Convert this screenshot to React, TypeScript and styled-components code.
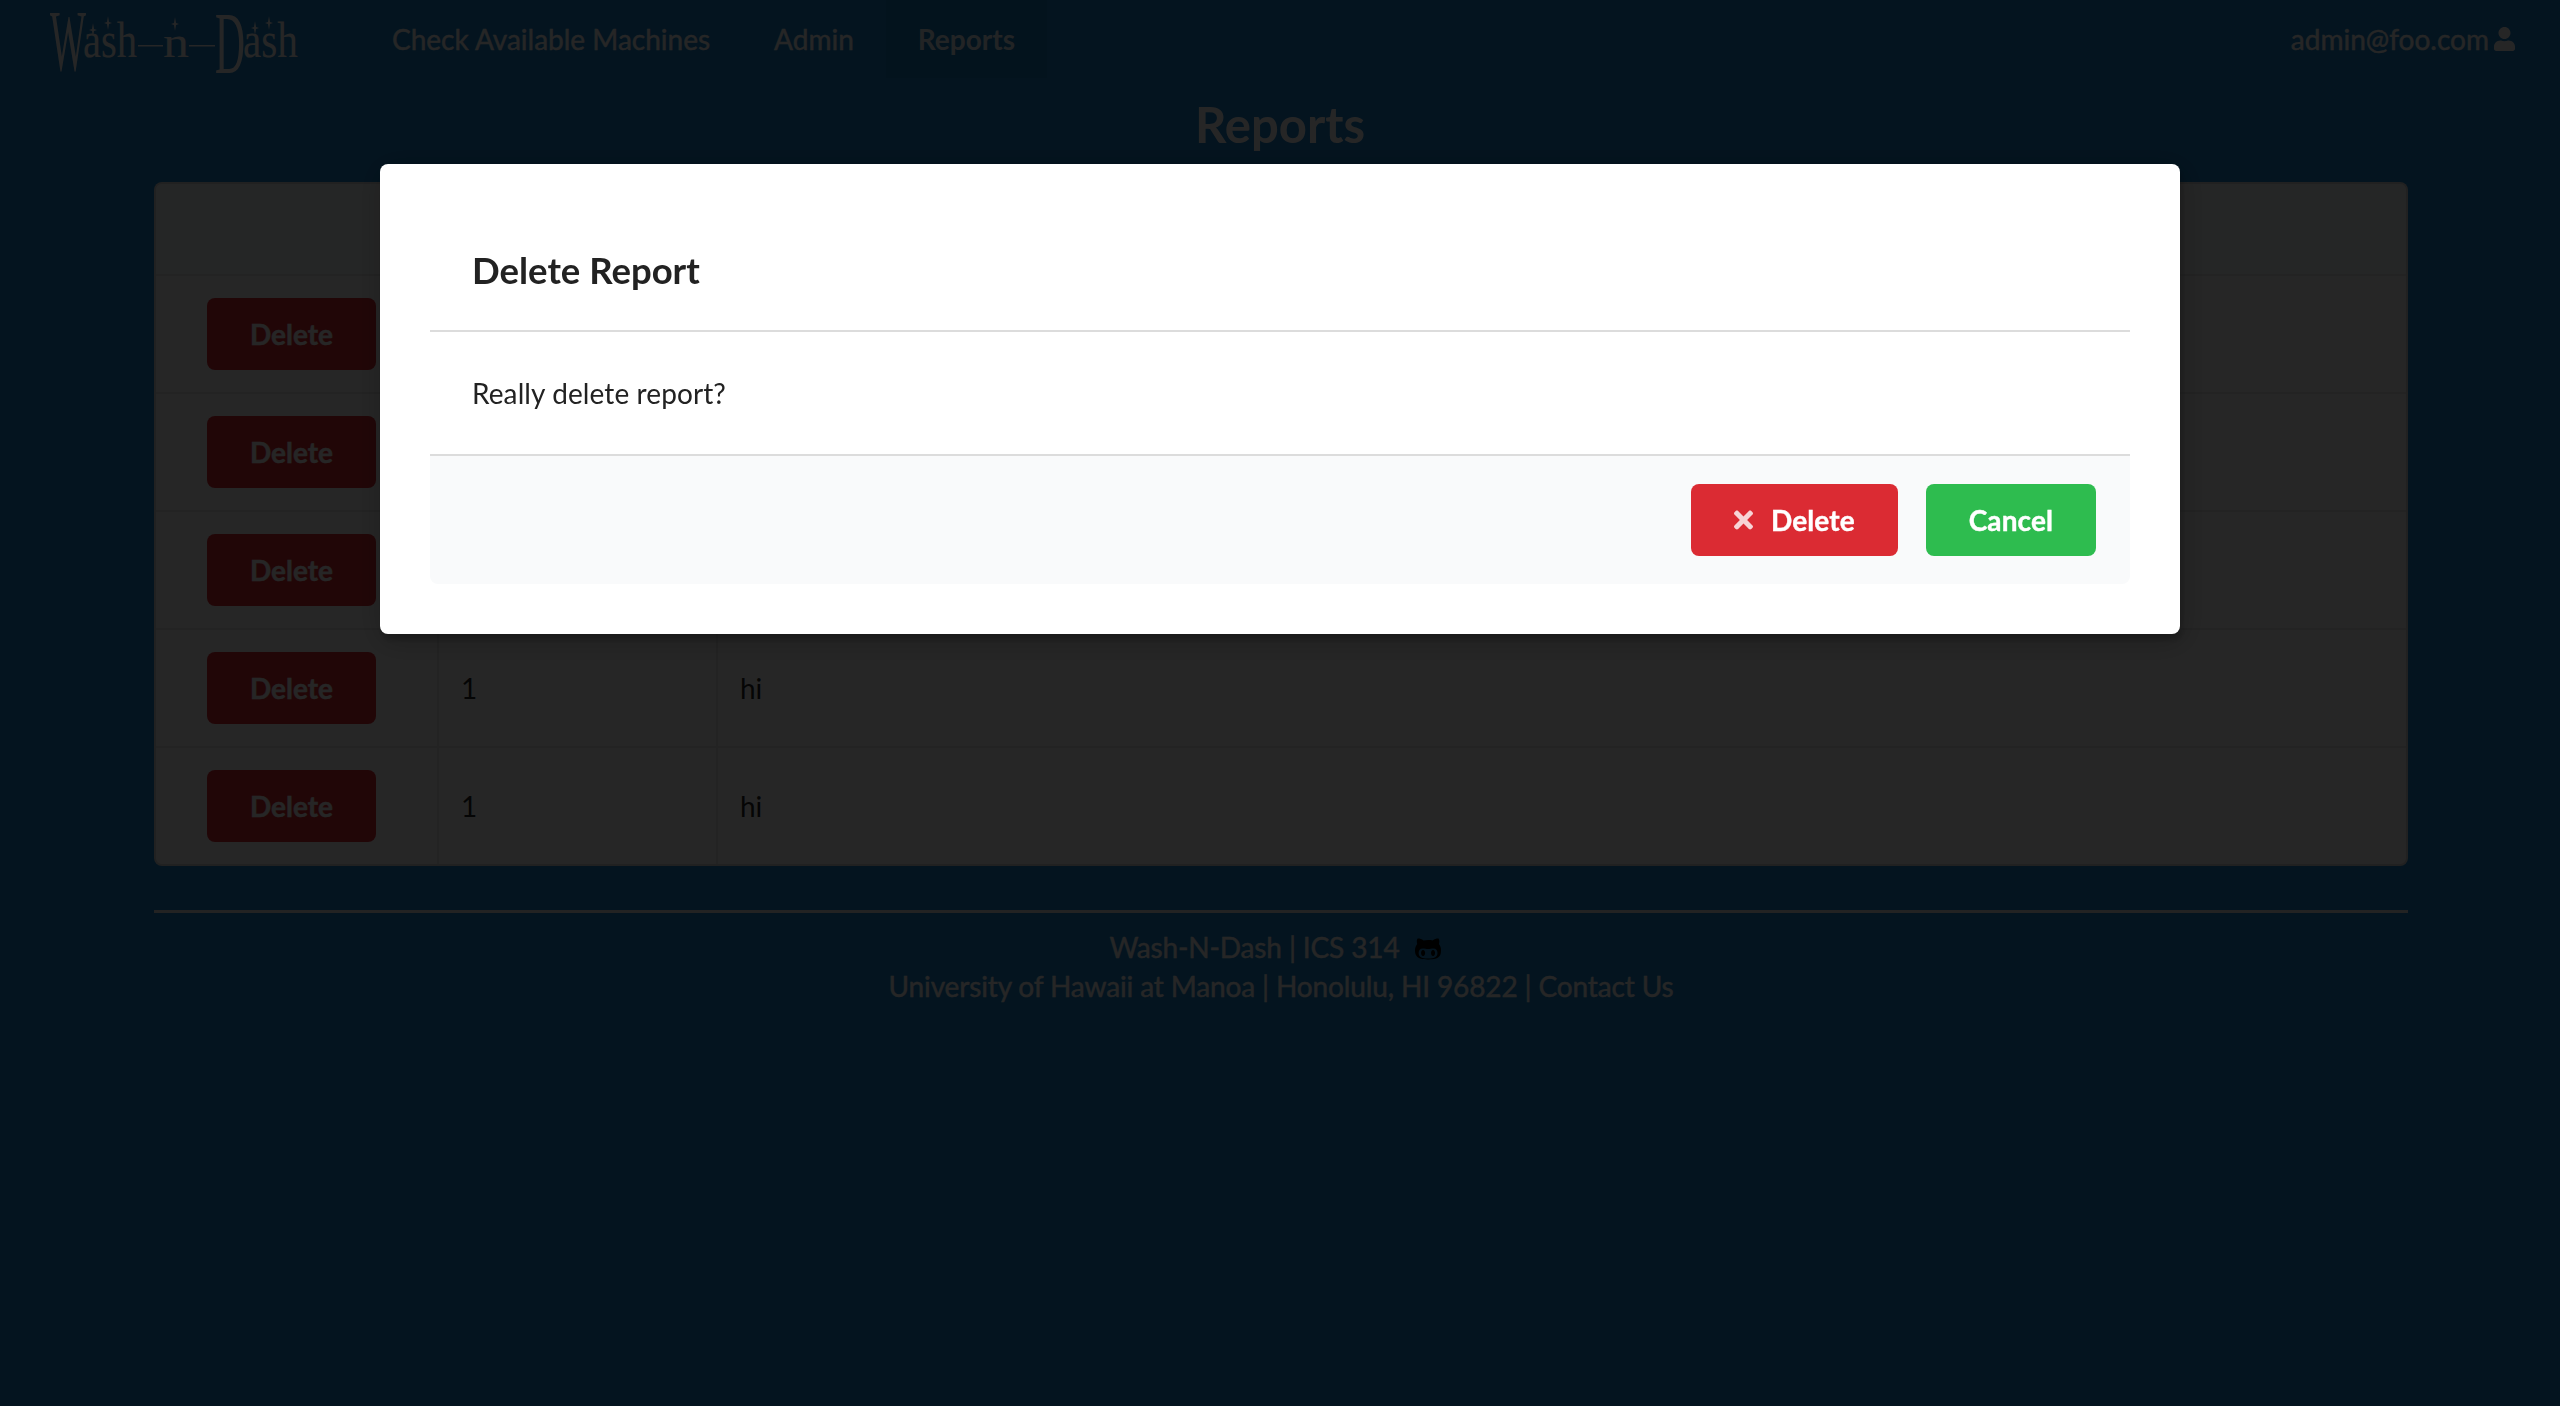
import { FaGithubAlt, FaTimes, FaUser } from "react-icons/fa";
import styled, { createGlobalStyle } from "styled-components";

const reports = [1, 2, 3, 4, 5];

// four pointed star over the letters of the logo
function Sparkle({ x, y }: { x: number; y: number }) {
  return (
    <path
      d={`M${x} ${y - 7}L${x + 1} ${y - 1}L${x + 4} ${y}L${x + 1} ${y + 1}L${x} ${y + 7}L${x - 1} ${y + 1}L${x - 4} ${y}L${x - 1} ${y - 1}Z`}
    />
  );
}

function Logo() {
  return (
    <LogoSvg viewBox="0 0 250 62" width="250" height="62">
      <text x="0" y="58" fontSize="86" textLength="36" lengthAdjust="spacingAndGlyphs">
        W
      </text>
      <text x="33" y="45" fontSize="50" textLength="54" lengthAdjust="spacingAndGlyphs">
        ash
      </text>
      <rect x="88" y="33" width="25" height="1.5" />
      <text x="113" y="45" fontSize="44" textLength="26" lengthAdjust="spacingAndGlyphs">
        n
      </text>
      <rect x="139" y="33" width="26" height="1.5" />
      <text x="165" y="61" fontSize="89" textLength="30" lengthAdjust="spacingAndGlyphs">
        D
      </text>
      <text x="193" y="45" fontSize="50" textLength="55" lengthAdjust="spacingAndGlyphs">
        ash
      </text>
      <Sparkle x={43} y={18} />
      <Sparkle x={58} y={11} />
      <Sparkle x={125} y={12} />
      <Sparkle x={205} y={16} />
      <Sparkle x={219} y={11} />
    </LogoSvg>
  );
}

function App() {
  return (
    <>
      <GlobalStyle />
      <Page>
        <NavBar>
          <LogoItem>
            <Logo />
          </LogoItem>
          <NavItem>Check Available Machines</NavItem>
          <NavItem>Admin</NavItem>
          <NavItem $active>Reports</NavItem>
          <UserItem>
            admin@foo.com <FaUser />
          </UserItem>
        </NavBar>
        <Title>Reports</Title>
        <TableWrapper>
          <ReportTable>
            <thead>
              <tr>
                <HeadCell />
                <HeadCell />
                <HeadCell />
              </tr>
            </thead>
            <tbody>
              {reports.map((id) => (
                <tr key={id}>
                  <ActionCell>
                    <TableButton>Delete</TableButton>
                  </ActionCell>
                  <Cell>1</Cell>
                  <Cell>hi</Cell>
                </tr>
              ))}
            </tbody>
          </ReportTable>
        </TableWrapper>
        <Footer>
          <FooterLine>
            Wash-N-Dash | ICS 314 <GithubLink><FaGithubAlt /></GithubLink>
          </FooterLine>
          <FooterLine>University of Hawaii at Manoa | Honolulu, HI 96822 | Contact Us</FooterLine>
        </Footer>
      </Page>
      <Dimmer>
        <Modal>
          <ModalHeader>Delete Report</ModalHeader>
          <ModalContent>Really delete report?</ModalContent>
          <ModalActions>
            <ModalButton $color="#db2b33">
              <FaTimes />
              Delete
            </ModalButton>
            <ModalButton $color="#2ebc4f">Cancel</ModalButton>
          </ModalActions>
        </Modal>
      </Dimmer>
    </>
  );
}

export default App;

const GlobalStyle = createGlobalStyle`
  html, body {
    margin: 0;
    height: 100%;
    background: #1b85ce;
  }

  body {
    font-family: Lato, "Open Sans", sans-serif;
    font-size: 28px;
    line-height: 40px;
    color: rgba(0, 0, 0, 0.87);
  }

  * {
    box-sizing: border-box;
  }
`;

const Page = styled.div`
  min-height: 1406px;
  background: #1b85ce;
`;

const NavBar = styled.nav`
  display: flex;
  align-items: stretch;
  height: 78px;
  color: #fff;
  -webkit-text-stroke: 0.4px #fff;
`;

const LogoItem = styled.div`
  display: flex;
  align-items: center;
  width: 360px;
  padding: 7px 0 0 50px;
`;

const LogoSvg = styled.svg`
  font-family: "Liberation Serif", serif;
  fill: #fff;
  overflow: visible;
  -webkit-text-stroke: 0;
`;

const NavItem = styled.div<{ $active?: boolean }>`
  display: flex;
  align-items: center;
  padding: 0 32px;
  font-weight: ${({ $active }) => ($active ? 700 : 400)};
  color: ${({ $active }) => ($active ? "rgba(255, 255, 255, 0.9)" : "#fff")};
  background: ${({ $active }) => ($active ? "rgba(0, 0, 0, 0.05)" : "transparent")};
  -webkit-text-stroke: ${({ $active }) => ($active ? "0" : "0.4px #fff")};
`;

const UserItem = styled.div`
  display: flex;
  align-items: center;
  gap: 5px;
  margin-left: auto;
  padding-right: 45px;

  svg {
    width: 21px;
    height: 24px;
  }
`;

const Title = styled.h1`
  margin: 0;
  padding-top: 18px;
  height: 104px;
  font-size: 49px;
  line-height: 56px;
  font-weight: 700;
  text-align: center;
  color: #fff;
`;

const TableWrapper = styled.div`
  margin: 0 152px 0 154px;
  background: #fff;
  border: 2px solid rgba(34, 36, 38, 0.15);
  border-radius: 8px;
  overflow: hidden;
`;

const ReportTable = styled.table`
  width: 100%;
  border-collapse: separate;
  border-spacing: 0;
  table-layout: fixed;
`;

const HeadCell = styled.th`
  height: 90px;
  padding: 0;
  background: #f9fafb;

  &:nth-child(1) {
    width: 281px;
  }

  &:nth-child(2) {
    width: 279px;
  }
`;

const Cell = styled.td`
  height: 118px;
  padding: 0 22px;
  border-top: 2px solid rgba(34, 36, 38, 0.1);
  border-left: 2px solid rgba(34, 36, 38, 0.1);
`;

const ActionCell = styled.td`
  height: 118px;
  padding: 0 0 0 51px;
  border-top: 2px solid rgba(34, 36, 38, 0.1);
`;

const TableButton = styled.button`
  display: block;
  width: 169px;
  height: 72px;
  border: 0;
  border-radius: 8px;
  background: #db2b33;
  color: #fff;
  font: 700 28px Lato, sans-serif;
  -webkit-text-stroke: 0.4px #fff;
`;

const Footer = styled.footer`
  margin: 44px 152px 0 154px;
  padding-top: 14px;
  border-top: 3px solid #ececec;
  color: #fff;
  text-align: center;
  letter-spacing: -0.13px;
  -webkit-text-stroke: 0.4px #fff;
`;

const FooterLine = styled.div`
  height: 39px;
`;

const GithubLink = styled.span`
  margin: 0 12px 0 8px;
  color: #000;
  -webkit-text-stroke: 0;

  svg {
    width: 26px;
    height: 28px;
    vertical-align: -5px;
  }
`;

const Dimmer = styled.div`
  position: fixed;
  inset: 0;
  display: flex;
  justify-content: center;
  align-items: flex-start;
  padding-top: 164px;
  background: rgba(0, 0, 0, 0.85);
`;

const Modal = styled.div`
  width: 1800px;
  padding: 50px;
  background: #fff;
  border-radius: 8px;
  box-shadow: 2px 6px 6px 0 rgba(0, 0, 0, 0.2), 2px 6px 30px 4px rgba(0, 0, 0, 0.2);
  color: #222;
`;

const ModalHeader = styled.div`
  height: 118px;
  padding: 0 42px;
  border-bottom: 2px solid #dcdcdc;
  font-size: 36.5px;
  font-weight: 700;
  line-height: 112px;
`;

const ModalContent = styled.div`
  height: 124px;
  padding: 0 42px;
  border-bottom: 2px solid #dcdcdc;
  line-height: 122px;
  letter-spacing: 0.1px;
`;

const ModalActions = styled.div`
  display: flex;
  justify-content: flex-end;
  gap: 28px;
  height: 128px;
  padding: 28px 34px 0 0;
  background: #f9fafb;
  border-radius: 0 0 8px 8px;
`;

const ModalButton = styled.button<{ $color: string }>`
  display: flex;
  align-items: center;
  justify-content: center;
  gap: 18px;
  height: 72px;
  padding: 0 43px;
  border: 0;
  border-radius: 8px;
  background: ${({ $color }) => $color};
  color: #fff;
  font: 700 28px Lato, sans-serif;
  letter-spacing: 0.1px;
  -webkit-text-stroke: 0.4px #fff;

  svg {
    width: 19px;
    height: 28px;
    opacity: 0.8;
  }
`;
